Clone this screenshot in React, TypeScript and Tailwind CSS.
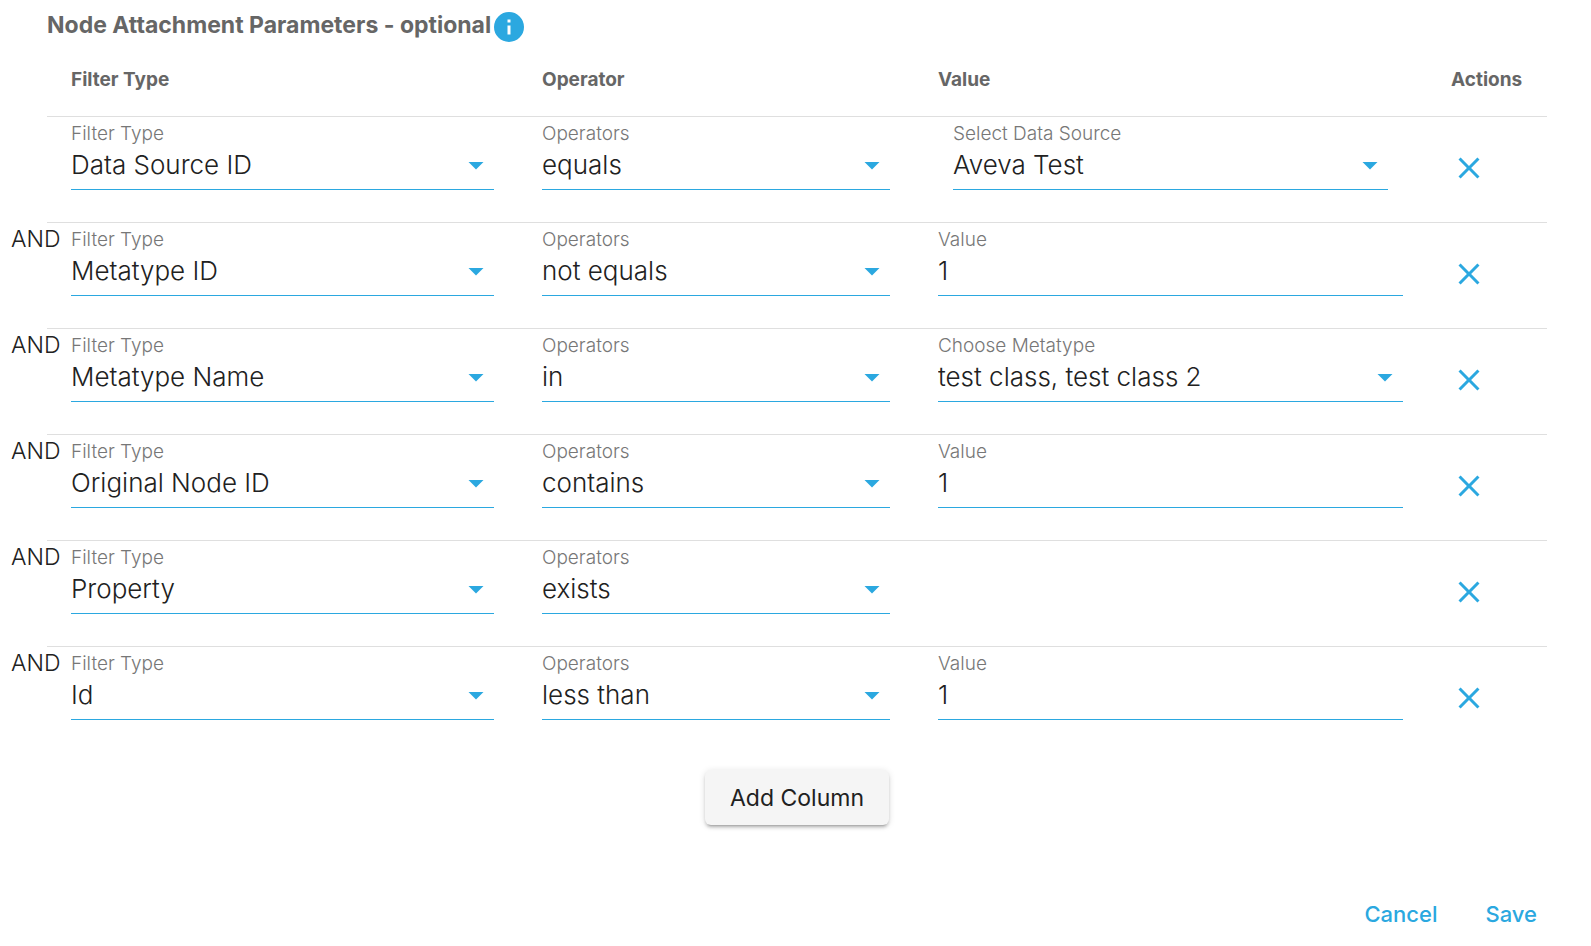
import React, { useState } from 'react';

interface FilterRow {
    id: number;
    type: string;
    operator: string;
    valueLabel?: string;
    value?: string;
    valueKind: 'select' | 'text' | 'none';
    inset?: boolean;
}

const initialRows: FilterRow[] = [
    { id: 1, type: 'Data Source ID', operator: 'equals', valueLabel: 'Select Data Source', value: 'Aveva Test', valueKind: 'select', inset: true },
    { id: 2, type: 'Metatype ID', operator: 'not equals', valueLabel: 'Value', value: '1', valueKind: 'text' },
    { id: 3, type: 'Metatype Name', operator: 'in', valueLabel: 'Choose Metatype', value: 'test class, test class 2', valueKind: 'select' },
    { id: 4, type: 'Original Node ID', operator: 'contains', valueLabel: 'Value', value: '1', valueKind: 'text' },
    { id: 5, type: 'Property', operator: 'exists', valueKind: 'none' },
    { id: 6, type: 'Id', operator: 'less than', valueLabel: 'Value', value: '1', valueKind: 'text' },
];

const filterTypes = ['Data Source ID', 'Metatype ID', 'Metatype Name', 'Original Node ID', 'Property', 'Id'];
const operators = ['equals', 'not equals', 'in', 'contains', 'exists', 'less than'];

const labelClass = 'block h-6 text-[19px] leading-6 font-light text-[#777777]';
const controlClass = 'block h-11 w-full appearance-none rounded-none border-b border-[#2ba8e0] bg-transparent pb-1.5 text-[26px] leading-9 font-light text-[#212121] outline-none';

function SelectField({ id, label, value, options }: { id: string; label: string; value: string; options: string[] }) {
    return (
        <div>
            <label htmlFor={id} className={labelClass}>{label}</label>
            <div className="relative">
                <select id={id} defaultValue={value} className={controlClass}>
                    {options.map((option) => (
                        <option key={option}>{option}</option>
                    ))}
                </select>
                <svg viewBox="0 0 24 24" className="pointer-events-none absolute top-px right-0 size-9 fill-[#2ba8e0]">
                    <path d="M7,10L12,15L17,10H7Z" />
                </svg>
            </div>
        </div>
    );
}

function TextField({ id, label, value }: { id: string; label: string; value: string }) {
    return (
        <div>
            <label htmlFor={id} className={labelClass}>{label}</label>
            <input id={id} type="text" defaultValue={value} className={controlClass} />
        </div>
    );
}

export default function App() {
    const [rows, setRows] = useState<FilterRow[]>(initialRows);

    const addRow = () => {
        setRows([...rows, { id: Date.now(), type: 'Id', operator: 'equals', valueLabel: 'Value', value: '', valueKind: 'text' }]);
    };

    return (
        <div className="bg-white pr-11 pl-[47px] font-['Inter',sans-serif] text-[#212121]">
            <div className="flex h-11 items-center pt-2.5">
                <h2 className="pb-1 text-[23px] leading-8 font-bold text-[#666666]">
                    Node Attachment Parameters - optional
                </h2>
                <button type="button" aria-label="More information">
                    <svg viewBox="0 0 24 24" className="size-9 fill-[#2ba8e0]">
                        <path d="M13,9H11V7H13M13,17H11V11H13M12,2A10,10 0 0,0 2,12A10,10 0 0,0 12,22A10,10 0 0,0 22,12A10,10 0 0,0 12,2Z" />
                    </svg>
                </button>
            </div>

            <table className="w-full table-fixed border-separate border-spacing-0">
                <thead>
                    <tr className="h-[73px] text-left text-[19px] text-[#666666]">
                        <th className="w-[31.4%] border-b border-[#dfdfdf] px-6 font-bold">Filter Type</th>
                        <th className="w-[26.4%] border-b border-[#dfdfdf] px-6 font-bold">Operator</th>
                        <th className="w-[34.2%] border-b border-[#dfdfdf] px-6 font-bold">Value</th>
                        <th className="border-b border-[#dfdfdf] px-6 font-bold">Actions</th>
                    </tr>
                </thead>
                <tbody className="[&>tr:not(:last-child)>td]:border-b [&>tr>td]:border-[#dfdfdf]">
                    {rows.map((row, index) => (
                        <tr key={row.id} className="align-top">
                            <td className="relative px-6 pt-[5px] pb-8">
                                {index > 0 && (
                                    <span className="absolute top-0 -left-9 text-[23px] leading-8 font-light">AND</span>
                                )}
                                <SelectField id={`type-${row.id}`} label="Filter Type" value={row.type} options={filterTypes} />
                            </td>
                            <td className="px-6 pt-[5px] pb-8">
                                <SelectField id={`operator-${row.id}`} label="Operators" value={row.operator} options={operators} />
                            </td>
                            <td className={row.inset ? 'px-[39px] pt-[5px] pb-8' : 'px-6 pt-[5px] pb-8'}>
                                {row.valueKind === 'select' && (
                                    <SelectField id={`value-${row.id}`} label={row.valueLabel ?? ''} value={row.value ?? ''} options={[row.value ?? '']} />
                                )}
                                {row.valueKind === 'text' && (
                                    <TextField id={`value-${row.id}`} label={row.valueLabel ?? ''} value={row.value ?? ''} />
                                )}
                            </td>
                            <td className="px-6 pt-[33px]">
                                <button
                                    type="button"
                                    aria-label="Remove filter"
                                    className="block"
                                    onClick={() => setRows(rows.filter((r) => r.id !== row.id))}
                                >
                                    <svg viewBox="0 0 24 24" className="size-9 fill-[#2ba8e0]">
                                        <path d="M19,6.41L17.59,5L12,10.59L6.41,5L5,6.41L10.59,12L5,17.59L6.41,19L12,13.41L17.59,19L19,17.59L13.41,12L19,6.41Z" />
                                    </svg>
                                </button>
                            </td>
                        </tr>
                    ))}
                </tbody>
            </table>

            <div className="flex justify-center pt-[18px]">
                <button
                    type="button"
                    onClick={addRow}
                    className="h-[55px] rounded-md bg-[#f5f5f5] px-[25px] pt-0.5 text-[23px] shadow-[0_4px_2px_-3px_rgba(0,0,0,0.2),0_3px_3px_rgba(0,0,0,0.14),0_1px_7px_rgba(0,0,0,0.12)]"
                >
                    Add Column
                </button>
            </div>

            <div className="flex justify-end gap-7 pt-[62px] text-[22px] font-medium text-[#2ba8e0]">
                <button type="button" className="h-[54px] px-2.5">Cancel</button>
                <button type="button" className="h-[54px] px-2.5">Save</button>
            </div>
        </div>
    );
}
